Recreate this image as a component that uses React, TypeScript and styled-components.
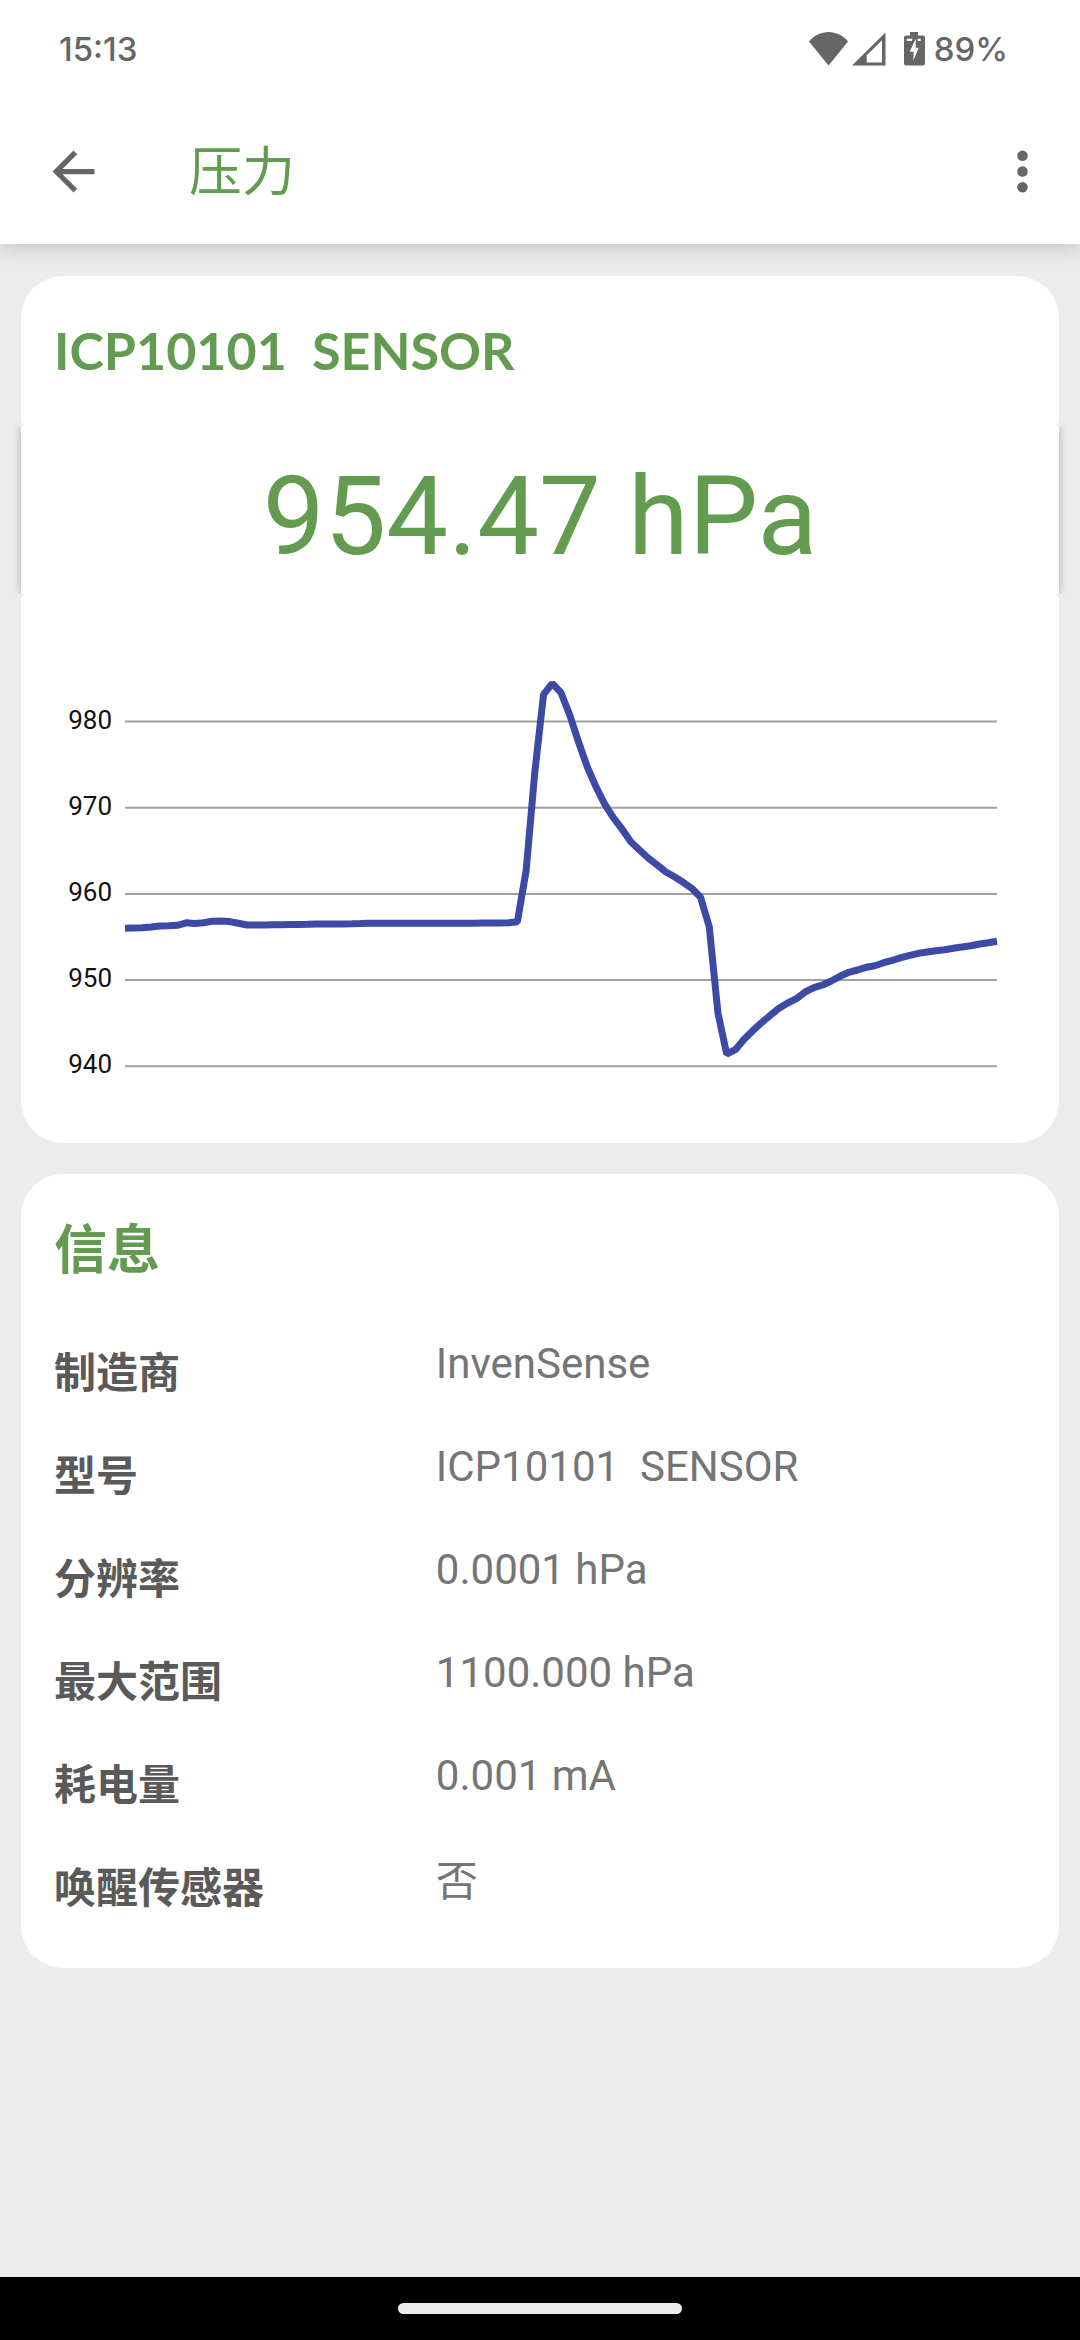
import React from "react";
import styled, { createGlobalStyle } from "styled-components";

const colors = {
  accent: "#639b50",
  icon: "#666666",
  label: "#5a5a5a",
  value: "#757575",
  page: "#ececec",
  line: "#3c4aa6",
};

const latin = `Roboto, "Noto Sans CJK SC", sans-serif`;
const cjk = `"Noto Sans CJK SC", Roboto, sans-serif`;

const GlobalStyle = createGlobalStyle`
  *, *::before, *::after { box-sizing: border-box; }
  body { margin: 0; background: ${colors.page}; font-family: ${latin}; }
  h1, h2, p, dl, dt, dd { margin: 0; }
`;

const Screen = styled.div`
  display: flex;
  flex-direction: column;
  min-height: 100vh;
  background: ${colors.page};
`;

const Header = styled.header`
  background: #fff;
  box-shadow: 0 4px 18px rgba(0, 0, 0, 0.18);
`;

const StatusBar = styled.div`
  display: flex;
  align-items: center;
  justify-content: space-between;
  height: 98px;
  padding: 0 72px 0 59px;
  color: ${colors.icon};
  font: 500 33px/42px Inter, Roboto, sans-serif;
`;

const StatusIcons = styled.div`
  display: flex;
  align-items: center;
`;

const StatusIcon = styled.svg<{ $gap: number }>`
  display: block;
  margin-right: ${(p) => p.$gap}px;
  fill: currentColor;
`;

const AppBar = styled.div`
  display: flex;
  align-items: center;
  height: 146px;
  padding: 0 26px 0 42px;
`;

const IconButton = styled.button`
  display: flex;
  padding: 0;
  border: 0;
  background: none;
  color: ${colors.icon};
  cursor: pointer;

  svg {
    width: 63px;
    height: 63px;
    fill: currentColor;
  }
`;

const PageTitle = styled.h1`
  flex: 1;
  padding: 0 0 6px 84px;
  color: ${colors.accent};
  font: 400 53px/77px ${cjk};
`;

const Content = styled.main`
  flex: 1;
  display: flex;
  flex-direction: column;
  gap: 31px;
  padding: 32px 21px;
`;

const TitleBlock = styled.div`
  padding: 43px 33px 45px;
  border-radius: 42px 42px 6px 6px;
  background: #fff;
`;

const SensorName = styled.h2`
  color: ${colors.accent};
  font: 700 52px/62px Lato, sans-serif;
  white-space: pre;
`;

const Reading = styled.p`
  padding: 26px 0 13px;
  background: #fff;
  box-shadow: 0 0 8px rgba(0, 0, 0, 0.28);
  clip-path: inset(0 -8px);
  color: ${colors.accent};
  font-size: 110px;
  line-height: 129px;
  text-align: center;
`;

const ChartBlock = styled.div`
  padding: 66px 0 43px;
  border-radius: 6px 6px 42px 42px;
  background: #fff;
`;

const ChartSvg = styled.svg`
  display: block;
  width: 100%;
  height: auto;

  text {
    fill: #111;
    font-family: ${latin};
    font-size: 26px;
    text-anchor: end;
  }

  line {
    stroke: #a0a0a0;
    stroke-width: 2;
  }

  polyline {
    fill: none;
    stroke: ${colors.line};
    stroke-width: 7;
    stroke-linejoin: bevel;
  }
`;

const InfoCard = styled.section`
  padding: 34px 33px 53px;
  border-radius: 42px;
  background: #fff;
`;

const InfoTitle = styled.h2`
  color: ${colors.accent};
  font: 700 53px/77px ${cjk};
`;

const InfoList = styled.dl`
  display: grid;
  gap: 42px;
  padding-top: 54px;
`;

const InfoRow = styled.div`
  display: grid;
  grid-template-columns: 11fr 17fr;
  align-items: start;
`;

const InfoLabel = styled.dt`
  color: ${colors.label};
  font: 700 42px/61px ${cjk};
`;

const InfoValue = styled.dd<{ $tall?: boolean }>`
  color: ${colors.value};
  font-size: 42px;
  line-height: ${(p) => (p.$tall ? 55 : 49)}px;
  white-space: pre-wrap;
`;

const NavBar = styled.footer`
  display: flex;
  align-items: center;
  justify-content: center;
  height: 63px;
  background: #000;
`;

const HomeHandle = styled.div`
  width: 284px;
  height: 11px;
  border-radius: 6px;
  background: ${colors.page};
`;

const ticks = [980, 970, 960, 950, 940];

const plot = { left: 104, right: 976, top: 61.5, step: 86.2 };

// Vertical position of each sample, oldest first.
const samples = [
  268.3, 268, 267.7, 267, 266, 265.7, 265.3, 262.8, 263.5, 262.7, 261.3, 261,
  261.6, 263.3, 265, 265, 264.9, 264.8, 264.7, 264.6, 264.5, 264.3, 264, 264,
  264, 263.9, 263.8, 263.6, 263.3, 263.2, 263.2, 263.2, 263.2, 263.2, 263.2,
  263.2, 263.2, 263.2, 263.2, 263.2, 263.2, 263.1, 263, 263, 262.8, 261.7,
  210.7, 112, 34.3, 23.3, 32.7, 55, 81.7, 106.7, 126.7, 144, 157.7, 169,
  181.7, 190, 198, 204.7, 211.7, 216.7, 222.3, 228.3, 237.3, 266.7, 353, 394,
  389.7, 379.3, 370.7, 362.7, 355.3, 348.3, 343, 338.7, 332, 327.7, 325, 321,
  316.3, 312.3, 310, 307.3, 305.7, 302.7, 300.3, 297.7, 295.3, 293.3, 292,
  290.7, 289.7, 288.3, 287, 285.7, 284, 282.7, 281.3,
];

const info = [
  { label: "制造商", value: "InvenSense" },
  { label: "型号", value: "ICP10101  SENSOR" },
  { label: "分辨率", value: "0.0001 hPa" },
  { label: "最大范围", value: "1100.000 hPa" },
  { label: "耗电量", value: "0.001 mA" },
  { label: "唤醒传感器", value: "否", tall: true },
];

function PressureChart() {
  const dx = (plot.right - plot.left) / (samples.length - 1);
  const points = samples.map((y, i) => `${plot.left + i * dx},${y}`).join(" ");
  return (
    <ChartSvg viewBox="0 0 1038 440" role="img" aria-label="压力">
      {ticks.map((tick, i) => {
        const y = plot.top + i * plot.step;
        return (
          <g key={tick}>
            <text x={plot.left - 13} y={y + 7}>
              {tick}
            </text>
            <line x1={plot.left} x2={plot.right} y1={y} y2={y} />
          </g>
        );
      })}
      <polyline points={points} />
    </ChartSvg>
  );
}

export default function App() {
  return (
    <Screen>
      <GlobalStyle />
      <Header>
        <StatusBar>
          <span>15:13</span>
          <StatusIcons>
            <StatusIcon $gap={4} width="39" height="34" viewBox="0 0 39 34">
              <path d="M0 9.5C5 3.5 12 0 19.5 0S34 3.5 39 9.5L19.5 33.5Z" />
            </StatusIcon>
            <StatusIcon $gap={18} width="34" height="34" viewBox="0 0 34 34">
              <path
                fillRule="evenodd"
                d="M0 33.5L33.5 0.5V33.5ZM14.7 30.5H30V8.3L14.7 23.3Z"
              />
            </StatusIcon>
            <StatusIcon $gap={9} width="21" height="34" viewBox="0 0 21 34">
              <path
                fillRule="evenodd"
                d="M6 0H14V3.5H19Q21 3.5 21 5.5V31.5Q21 33.5 19 33.5H2Q0 33.5 0 31.5V5.5Q0 3.5 2 3.5H6ZM2.7 6.7V9H7.8L8.7 6.7ZM13.7 6.7V9H16.7V6.7ZM11.7 6.7L5.7 19.7H9.7L9.3 28.7L14.7 15.7H11.7Z"
              />
            </StatusIcon>
            <span>89%</span>
          </StatusIcons>
        </StatusBar>
        <AppBar>
          <IconButton type="button" aria-label="返回">
            <svg viewBox="0 0 24 24">
              <path d="M20 11H7.83l5.59-5.59L12 4l-8 8 8 8 1.41-1.41L7.83 13H20z" />
            </svg>
          </IconButton>
          <PageTitle>压力</PageTitle>
          <IconButton type="button" aria-label="更多选项">
            <svg viewBox="0 0 24 24">
              <circle cx="12" cy="6" r="2" />
              <circle cx="12" cy="12" r="2" />
              <circle cx="12" cy="18" r="2" />
            </svg>
          </IconButton>
        </AppBar>
      </Header>

      <Content>
        <section>
          <TitleBlock>
            <SensorName>{"ICP10101  SENSOR"}</SensorName>
          </TitleBlock>
          <Reading>954.47 hPa</Reading>
          <ChartBlock>
            <PressureChart />
          </ChartBlock>
        </section>

        <InfoCard>
          <InfoTitle>信息</InfoTitle>
          <InfoList>
            {info.map((row) => (
              <InfoRow key={row.label}>
                <InfoLabel>{row.label}</InfoLabel>
                <InfoValue $tall={row.tall}>{row.value}</InfoValue>
              </InfoRow>
            ))}
          </InfoList>
        </InfoCard>
      </Content>

      <NavBar>
        <HomeHandle />
      </NavBar>
    </Screen>
  );
}
